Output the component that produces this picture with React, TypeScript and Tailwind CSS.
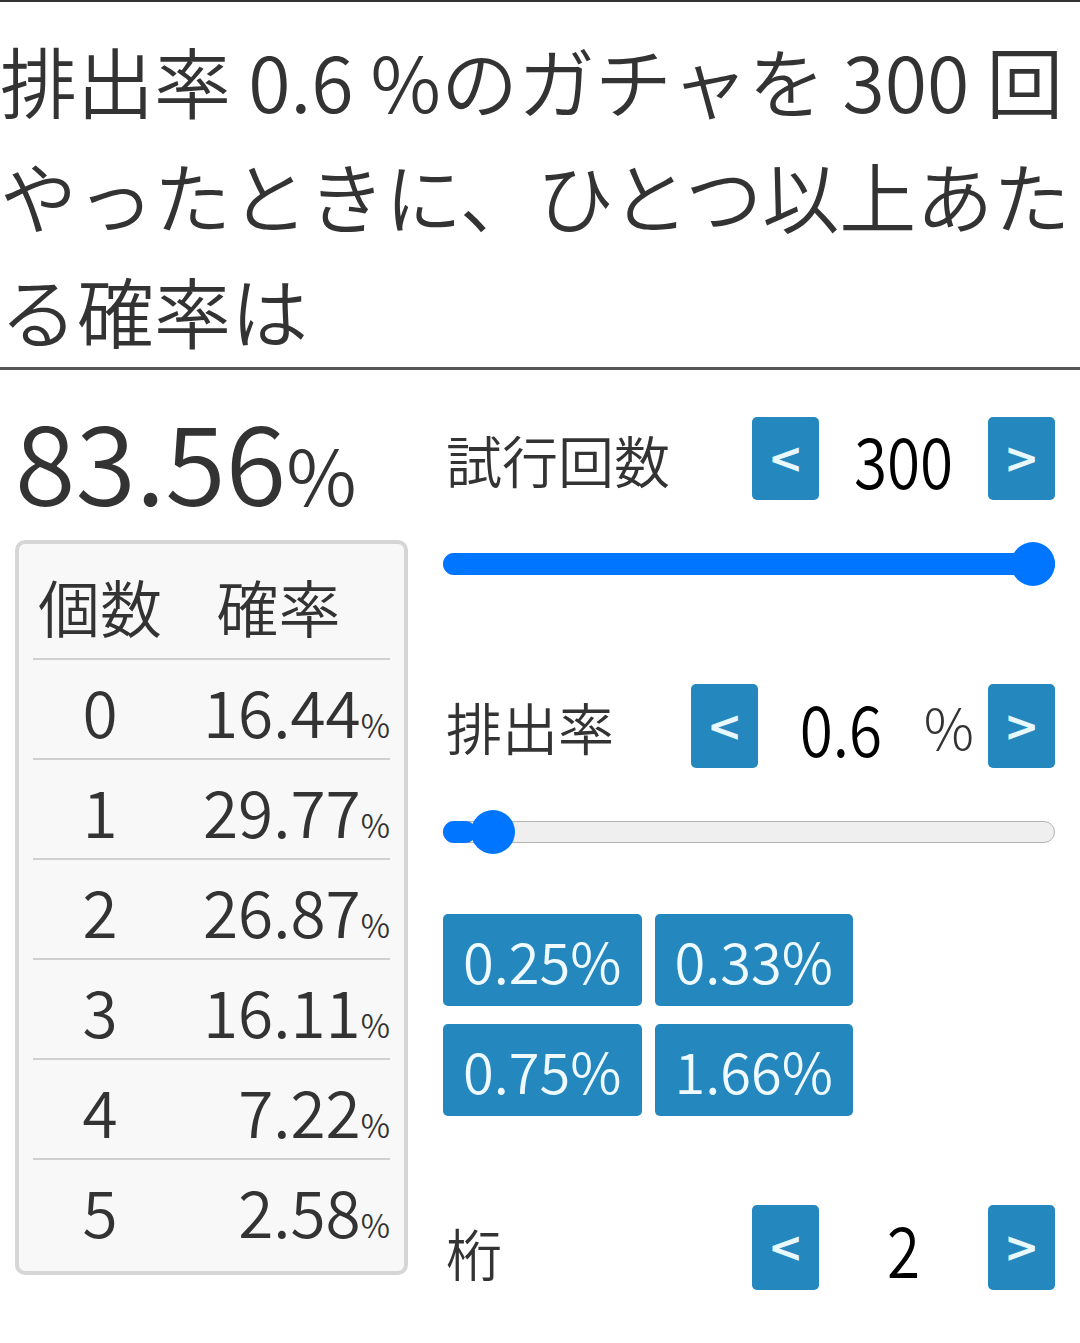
import React from 'react'

const rows = [
  { n: 0, p: '16.44' },
  { n: 1, p: '29.77' },
  { n: 2, p: '26.87' },
  { n: 3, p: '16.11' },
  { n: 4, p: '7.22' },
  { n: 5, p: '2.58' },
]

const presets = ['0.25%', '0.33%', '0.75%', '1.66%']

function StepButton({ label }: { label: string }) {
  return (
    <button className="flex h-full w-[67px] items-center justify-center rounded-[5px] bg-[#2487be] font-['DejaVu_Sans',sans-serif] text-[42px] font-bold text-[#e8f8ff]">
      {label}
    </button>
  )
}

function Slider({ percent }: { percent: number }) {
  return (
    <div className="relative flex h-[44px] items-center">
      <div className="relative h-[22px] w-full rounded-full border border-[#b4b4b4] bg-[#efefef]">
        <div
          className="absolute -top-px -left-px h-[22px] rounded-full bg-[#0075ff]"
          style={{ width: `calc(${percent}% + 2px)` }}
        />
      </div>
      <div
        className="absolute top-0 h-[44px] w-[44px] -translate-x-1/2 rounded-full bg-[#0075ff]"
        style={{ left: `calc(22px + (100% - 44px) * ${percent / 100})` }}
      />
    </div>
  )
}

export default function App() {
  return (
    <div className="w-[1080px] bg-white font-['Noto_Sans_CJK_JP',sans-serif] font-[350] text-[#333]">
      <h1 className="border-t-2 border-b-[3px] border-t-[#333] border-b-[#555] pt-[20px] text-[77px] leading-[115px] font-[350]">
        排出率 0.6 %のガチャを 300 回やったときに、ひとつ以上あたる確率は
      </h1>

      <div className="flex">
        <div className="w-[408px] pl-[15px]">
          <div className="mt-[28px] h-[120px] text-[110px] leading-[120px]">
            83.56<span className="text-[77px]">%</span>
          </div>
          <div className="mt-[22px] h-[735px] rounded-[10px] border-4 border-[#d6d6d6] bg-[#f8f8f8] px-[14px] pb-[13px]">
            <div className="grid h-[114px] grid-cols-[134px_1fr] items-center pt-[10px] text-[62px]">
              <div className="text-center">個数</div>
              <div className="text-center">確率</div>
            </div>
            {rows.map((r) => (
              <div
                key={r.n}
                className="grid h-[100px] grid-cols-[134px_1fr] items-center border-t-2 border-[#d0d0d0] pt-[2px] text-[64px]"
              >
                <div className="text-center">{r.n}</div>
                <div className="text-right">
                  {r.p}
                  <span className="text-[32px]">%</span>
                </div>
              </div>
            ))}
          </div>
        </div>

        <div className="ml-[35px] flex w-[612px] flex-col pt-[47px]">
          <div className="flex h-[83px] items-center">
            <div className="w-[309px] pl-[3px] text-[56px]">試行回数</div>
            <StepButton label="<" />
            <div className="flex-1 scale-x-[0.86] text-center text-[70px] text-black">300</div>
            <StepButton label=">" />
          </div>
          <div className="mt-[42px]">
            <Slider percent={100} />
          </div>

          <div className="mt-[98px] flex h-[84px] items-center">
            <div className="w-[248px] pl-[3px] text-[56px]">排出率</div>
            <StepButton label="<" />
            <div className="flex-1 scale-x-[0.86] text-center text-[70px] text-black">0.6</div>
            <div className="pr-[14px] text-[56px] font-light">%</div>
            <StepButton label=">" />
          </div>
          <div className="mt-[42px]">
            <Slider percent={5} />
          </div>

          <div className="mt-[60px] grid w-[410px] grid-cols-2 gap-x-[13px] gap-y-[18px]">
            {presets.map((p) => (
              <button
                key={p}
                className="flex h-[92px] items-center justify-center rounded-[5px] bg-[#2487be] text-[56px] text-[#eefaff]"
              >
                {p}
              </button>
            ))}
          </div>

          <div className="mt-[89px] flex h-[85px] items-center">
            <div className="w-[309px] pl-[3px] pt-[8px] text-[56px]">桁</div>
            <StepButton label="<" />
            <div className="flex-1 scale-x-[0.86] text-center text-[70px] text-black">2</div>
            <StepButton label=">" />
          </div>
        </div>
      </div>
    </div>
  )
}
